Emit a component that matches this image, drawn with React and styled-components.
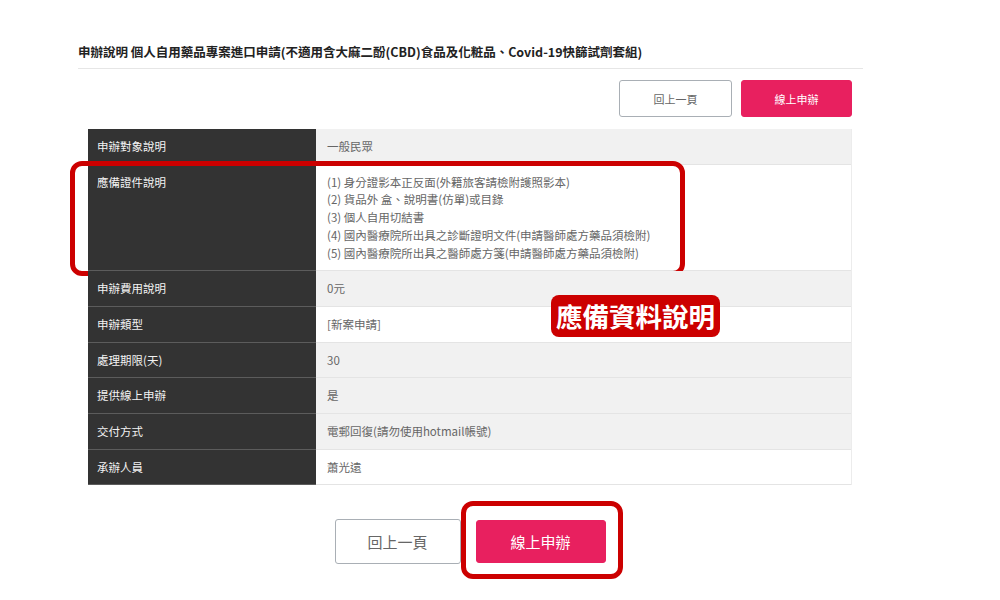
import React from "react";
import styled, { createGlobalStyle } from "styled-components";

const GlobalStyle = createGlobalStyle`
  html, body {
    margin: 0;
    padding: 0;
    background: #fff;
  }
  body {
    font-family: "Noto Sans CJK TC", "Noto Sans", sans-serif;
    color: #333;
  }
`;

const rows = [
  { label: "申辦對象說明", value: ["一般民眾"], gray: true },
  {
    label: "應備證件說明",
    value: [
      "(1) 身分證影本正反面(外籍旅客請檢附護照影本)",
      "(2) 貨品外 盒、說明書(仿單)或目錄",
      "(3) 個人自用切結書",
      "(4) 國內醫療院所出具之診斷證明文件(申請醫師處方藥品須檢附)",
      "(5) 國內醫療院所出具之醫師處方箋(申請醫師處方藥品須檢附)",
    ],
    highlight: true,
  },
  { label: "申辦費用說明", value: ["0元"], gray: true },
  { label: "申辦類型", value: ["[新案申請]"] },
  { label: "處理期限(天)", value: ["30"], gray: true },
  { label: "提供線上申辦", value: ["是"], gray: true },
  { label: "交付方式", value: ["電郵回復(請勿使用hotmail帳號)"], gray: true },
  { label: "承辦人員", value: ["蕭光遠"] },
];

const App = () => {
  return (
    <>
      <GlobalStyle />
      <Page>
        <Title>
          申辦說明 個人自用藥品專案進口申請(不適用含大麻二酚(CBD)食品及化粧品、Covid-19快篩試劑套組)
        </Title>
        <Divider />
        <Section>
          <Toolbar>
            <SmallButton>回上一頁</SmallButton>
            <SmallButton primary>線上申辦</SmallButton>
          </Toolbar>

          <Table>
            {rows.map((row) => (
              <Row key={row.label} gray={row.gray}>
                <LabelCell>{row.label}</LabelCell>
                <ValueCell>
                  {row.value.map((line) => (
                    <div key={line}>{line}</div>
                  ))}
                </ValueCell>
                {row.highlight && <RowRing />}
              </Row>
            ))}
            <Callout>應備資料說明</Callout>
          </Table>

          <Footer>
            <BigButton>回上一頁</BigButton>
            <RingWrap>
              <BigButton primary>線上申辦</BigButton>
              <ButtonRing />
            </RingWrap>
          </Footer>
        </Section>
      </Page>
    </>
  );
};

export default App;

const Page = styled.div`
  width: 785px;
  padding: 42px 0 37px 78px;
`;

const Title = styled.h2`
  margin: 0;
  font-size: 12.5px;
  line-height: 20px;
  font-weight: 700;
  color: #222;
  white-space: nowrap;
`;

const Divider = styled.div`
  height: 1px;
  background: #e6e6e6;
  margin-top: 6px;
`;

const Section = styled.div`
  width: 764px;
  margin-left: 10px;
`;

const Toolbar = styled.div`
  display: flex;
  justify-content: flex-end;
  gap: 9px;
  margin-top: 11px;
`;

const SmallButton = styled.button`
  width: ${(p) => (p.primary ? "111px" : "113px")};
  height: 37px;
  border-radius: 3px;
  font-family: inherit;
  font-size: 11px;
  cursor: pointer;
  border: 1px solid ${(p) => (p.primary ? "#e8205f" : "#a9afb5")};
  background: ${(p) => (p.primary ? "#e8205f" : "#fff")};
  color: ${(p) => (p.primary ? "#fff" : "#666")};
`;

const Table = styled.div`
  position: relative;
  margin-top: 12px;
  border-right: 1px solid #ececec;
`;

const Row = styled.div`
  position: relative;
  display: grid;
  grid-template-columns: 228px 1fr;
  background: ${(p) => (p.gray ? "#f1f1f1" : "#fff")};
  border-bottom: 1px solid #e4e4e4;
  font-size: 11.5px;
  line-height: 17.7px;
`;

const LabelCell = styled.div`
  background: #333;
  color: #f2f2f2;
  padding: 9px 9px 8px;
  box-shadow: 0 1px 0 #5c5c5c;
`;

const ValueCell = styled.div`
  color: #666;
  padding: 9px 11px 8px;
`;

const RowRing = styled.div`
  position: absolute;
  top: -4px;
  bottom: -6px;
  left: -18px;
  right: 166px;
  border: 5px solid #cc0000;
  border-radius: 12px;
  pointer-events: none;
`;

const Callout = styled.div`
  position: absolute;
  top: 166px;
  left: 463px;
  width: 169px;
  height: 42px;
  box-sizing: border-box;
  background: #cc0000;
  color: #fff;
  border-radius: 8px;
  font-size: 26.5px;
  font-weight: 700;
  line-height: 42px;
  text-align: center;
  white-space: nowrap;
`;

const Footer = styled.div`
  display: flex;
  justify-content: center;
  align-items: center;
  gap: 15px;
  margin-top: 34px;
`;

const RingWrap = styled.div`
  position: relative;
  display: flex;
`;

const BigButton = styled.button`
  width: ${(p) => (p.primary ? "130px" : "126px")};
  height: ${(p) => (p.primary ? "43px" : "45px")};
  border-radius: 3px;
  font-family: inherit;
  font-size: 15px;
  cursor: pointer;
  border: 1px solid ${(p) => (p.primary ? "#e8205f" : "#a9afb5")};
  background: ${(p) => (p.primary ? "#e8205f" : "#fff")};
  color: ${(p) => (p.primary ? "#fff" : "#666")};
`;

const ButtonRing = styled.div`
  position: absolute;
  top: -19px;
  bottom: -16px;
  left: -15px;
  right: -17px;
  border: 5px solid #cc0000;
  border-radius: 12px;
  pointer-events: none;
`;
